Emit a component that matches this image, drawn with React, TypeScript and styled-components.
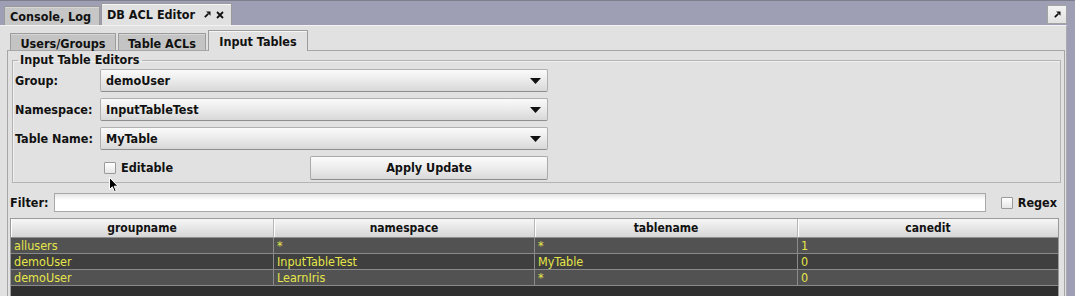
import React from "react";
import styled, { createGlobalStyle } from "styled-components";

const GlobalStyle = createGlobalStyle`
  html, body {
    margin: 0;
    padding: 0;
    background: #9e9eb4;
  }
  body {
    font-family: "DejaVu Sans", "Liberation Sans", sans-serif;
    font-stretch: condensed;
    font-size: 12px;
    color: #111;
  }
  * {
    box-sizing: border-box;
  }
`;

const Window = styled.div`
  position: relative;
  width: 1075px;
  height: 296px;
  overflow: hidden;
  background: #9e9eb4;
  border-top: 1px solid #7e7e8c;
  display: flex;
  flex-direction: column;
`;

const TopBar = styled.div`
  height: 24px;
  flex-shrink: 0;
  display: flex;
  align-items: flex-end;
  padding: 0 8px 0 4px;
`;

const DocTab = styled.div<{ $active?: boolean }>`
  display: flex;
  align-items: center;
  height: ${(p) => (p.$active ? 22 : 19)}px;
  padding: 0 ${(p) => (p.$active ? "7px" : "8px")} 0 5px;
  margin-right: 1px;
  font-weight: bold;
  font-size: 12.5px;
  background: ${(p) => (p.$active ? "#e1e1e1" : "#c6c6c6")};
  border: 1px solid #9a9a9a;
  border-bottom: none;
  box-shadow: inset 0 1px 0 ${(p) => (p.$active ? "#f6f6f6" : "#d8d8d8")};
`;

const TabIcons = styled.span`
  display: flex;
  align-items: center;
  gap: 5px;
  margin-left: 9px;
`;

const CornerButton = styled.div`
  margin-left: auto;
  align-self: center;
  margin-top: 3px;
  width: 20px;
  height: 19px;
  display: flex;
  align-items: center;
  justify-content: center;
  background: linear-gradient(#f2f2f2, #e2e2e2);
  border: 1px solid #a4a4a4;
`;

const Main = styled.div`
  flex: 1;
  width: 1067px;
  min-height: 0;
  display: flex;
  flex-direction: column;
  background: #e1e1e1;
  border-right: 1px solid #a9a9b0;
  border-top: 1px solid #f2f2f2;
  padding: 4px 1px 0 7px;
`;

const SubTabs = styled.div`
  height: 20px;
  flex-shrink: 0;
  display: flex;
  align-items: flex-end;
  gap: 2px;
  padding-left: 3px;
`;

const SubTab = styled.div<{ $active?: boolean; $w: number }>`
  position: relative;
  width: ${(p) => p.$w}px;
  height: ${(p) => (p.$active ? 21 : 17)}px;
  margin-bottom: ${(p) => (p.$active ? -1 : 0)}px;
  display: flex;
  align-items: center;
  justify-content: center;
  font-weight: bold;
  font-size: 12.5px;
  background: ${(p) => (p.$active ? "#e1e1e1" : "#c4c4c4")};
  border: 1px solid #9c9c9c;
  border-bottom: none;
  box-shadow: inset 0 1px 0 ${(p) => (p.$active ? "#f7f7f7" : "#d6d6d6")};
  padding-top: ${(p) => (p.$active ? 0 : 2)}px;
`;

const TabPanel = styled.div`
  flex: 1;
  min-height: 0;
  display: flex;
  flex-direction: column;
  border: 1px solid #a6a6a6;
  border-bottom: none;
  padding-top: 2px;
`;

const Group = styled.fieldset`
  margin: 0 3px 0 4px;
  padding: 2px 0 3px 2px;
  border: 1px solid #b4b4b4;
  box-shadow: inset 1px 1px 0 #f0f0f0;
`;

const Legend = styled.legend`
  margin-left: 3px;
  padding: 0 2px;
  line-height: 14px;
  font-weight: bold;
  font-size: 12.5px;
`;

const FormGrid = styled.div`
  display: grid;
  grid-template-columns: 85px 448px;
  grid-auto-rows: 23px;
  row-gap: 6px;
  align-items: center;
`;

const Label = styled.div`
  font-weight: bold;
  font-size: 12.5px;
`;

const Combo = styled.div`
  height: 23px;
  display: flex;
  align-items: center;
  justify-content: space-between;
  padding: 0 6px 0 5px;
  font-weight: bold;
  font-size: 12.5px;
  background: linear-gradient(#fafafa, #ececec 45%, #d8d8d8);
  border: 1px solid #b0b0b0;
  border-bottom-color: #8e8e8e;
  border-radius: 2px;
`;

const ActionRow = styled.div`
  grid-column: 2;
  height: 24px;
  display: flex;
  align-items: center;
`;

const CheckLabel = styled.label`
  display: flex;
  align-items: center;
  gap: 5px;
  font-weight: bold;
  font-size: 12.5px;
`;

const Box = styled.span`
  width: 12px;
  height: 12px;
  flex-shrink: 0;
  border: 1px solid #9a9a9a;
  border-radius: 1px;
  background: linear-gradient(#ffffff, #e6e6e6);
`;

const EditableCheck = styled(CheckLabel)`
  width: 210px;
  padding-left: 4px;
`;

const Button = styled.div`
  width: 238px;
  height: 24px;
  display: flex;
  align-items: center;
  justify-content: center;
  font-weight: bold;
  font-size: 12.5px;
  background: linear-gradient(#fbfbfb, #ececec 50%, #d9d9d9);
  border: 1px solid #aaaaaa;
  border-bottom-color: #8c8c8c;
  border-radius: 2px;
`;

const FilterRow = styled.div`
  height: 19px;
  margin-top: 10px;
  flex-shrink: 0;
  display: flex;
  align-items: center;
  padding: 0 7px 0 2px;
`;

const FilterLabel = styled.div`
  width: 44px;
  font-weight: bold;
  font-size: 12.5px;
`;

const FilterInput = styled.div`
  flex: 1;
  height: 19px;
  background: linear-gradient(#e4e4e4, #ffffff 35%);
  border: 1px solid #a8a8a8;
  margin-right: 15px;
`;

const TableWrap = styled.div`
  flex: 1;
  min-height: 0;
  margin: 6px 5px 0 2px;
  display: flex;
  flex-direction: column;
  background: #2f2f2f;
  border: 1px solid #9a9a9a;
  border-bottom: none;
`;

const HeaderRow = styled.div`
  display: grid;
  grid-template-columns: 263px 261px 263px 1fr;
  height: 19px;
  flex-shrink: 0;
`;

const HeaderCell = styled.div`
  display: flex;
  align-items: center;
  justify-content: center;
  font-weight: bold;
  background: linear-gradient(#f6f6f6, #e6e6e6 50%, #d6d6d6);
  border-right: 1px solid #b6b6b6;
  border-bottom: 1px solid #8f8f8f;
  box-shadow: inset 1px 0 0 #ffffff;
  &:last-child {
    border-right: none;
  }
`;

const DataRow = styled.div<{ $odd: boolean }>`
  display: grid;
  grid-template-columns: 263px 261px 263px 1fr;
  height: 16px;
  flex-shrink: 0;
  background: ${(p) => (p.$odd ? "#3f3f3f" : "#525252")};
  border-bottom: 1px solid #8a8a8a;
`;

const DataCell = styled.div`
  padding-left: 3px;
  line-height: 15px;
  font-size: 12.5px;
  color: #e6e64a;
  white-space: nowrap;
  overflow: hidden;
  border-right: 1px solid #8a8a8a;
  &:last-child {
    border-right: none;
  }
`;

const Cursor = styled.svg`
  position: absolute;
  left: 109px;
  top: 176px;
`;

const PinIcon = () => (
  <svg width="7" height="7" viewBox="0 0 7 7">
    <path d="M0.8 6.2 L4.2 2.8" stroke="#111" strokeWidth="1.8" />
    <path d="M2.2 0.5 L6.5 0.5 L6.5 4.8 Z" fill="#111" />
  </svg>
);

const CloseIcon = () => (
  <svg width="8" height="8" viewBox="0 0 8 8">
    <path d="M1 1 L7 7 M7 1 L1 7" stroke="#111" strokeWidth="1.8" />
  </svg>
);

const Arrow = () => (
  <svg width="11" height="6" viewBox="0 0 11 6">
    <path d="M0 0 H11 L5.5 6 Z" fill="#111" />
  </svg>
);

const fields = [
  { label: "Group:", value: "demoUser" },
  { label: "Namespace:", value: "InputTableTest" },
  { label: "Table Name:", value: "MyTable" },
];

const columns = ["groupname", "namespace", "tablename", "canedit"];

const rows = [
  ["allusers", "*", "*", "1"],
  ["demoUser", "InputTableTest", "MyTable", "0"],
  ["demoUser", "LearnIris", "*", "0"],
];

export default function App() {
  return (
    <>
      <GlobalStyle />
      <Window>
        <TopBar>
          <DocTab>Console, Log</DocTab>
          <DocTab $active>
            DB ACL Editor
            <TabIcons>
              <PinIcon />
              <CloseIcon />
            </TabIcons>
          </DocTab>
          <CornerButton>
            <PinIcon />
          </CornerButton>
        </TopBar>
        <Main>
          <SubTabs>
            <SubTab $w={106}>Users/Groups</SubTab>
            <SubTab $w={88}>Table ACLs</SubTab>
            <SubTab $w={100} $active>
              Input Tables
            </SubTab>
          </SubTabs>
          <TabPanel>
            <Group>
              <Legend>Input Table Editors</Legend>
              <FormGrid>
                {fields.map((f) => (
                  <React.Fragment key={f.label}>
                    <Label>{f.label}</Label>
                    <Combo>
                      {f.value}
                      <Arrow />
                    </Combo>
                  </React.Fragment>
                ))}
                <ActionRow>
                  <EditableCheck>
                    <Box />
                    Editable
                  </EditableCheck>
                  <Button>Apply Update</Button>
                </ActionRow>
              </FormGrid>
            </Group>
            <FilterRow>
              <FilterLabel>Filter:</FilterLabel>
              <FilterInput />
              <CheckLabel>
                <Box />
                Regex
              </CheckLabel>
            </FilterRow>
            <TableWrap>
              <HeaderRow>
                {columns.map((c) => (
                  <HeaderCell key={c}>{c}</HeaderCell>
                ))}
              </HeaderRow>
              {rows.map((r, i) => (
                <DataRow key={i} $odd={i % 2 === 1}>
                  {r.map((v, j) => (
                    <DataCell key={j}>{v}</DataCell>
                  ))}
                </DataRow>
              ))}
            </TableWrap>
          </TabPanel>
        </Main>
        <Cursor width="10" height="16" viewBox="0 0 10 16">
          <path
            d="M0.5 0.5 L0.5 12.5 L3.3 9.8 L5.4 14.6 L7.2 13.8 L5.2 9.2 L9 9.2 Z"
            fill="#000"
            stroke="#fff"
            strokeWidth="1"
          />
        </Cursor>
      </Window>
    </>
  );
}
